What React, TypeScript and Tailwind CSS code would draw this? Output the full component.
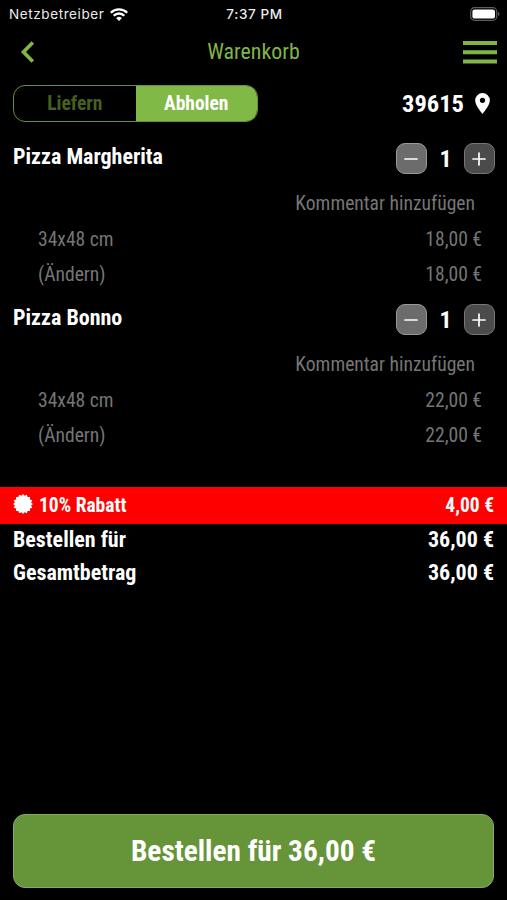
import type { ReactNode } from 'react';

interface CartItem {
  name: string;
  size: string;
  quantity: number;
  price: string;
}

interface SummaryRowProps {
  label: string;
  value: string;
}

interface QuantityButtonProps {
  label: string;
  className: string;
  children: ReactNode;
}

const items: CartItem[] = [
  { name: 'Pizza Margherita', size: '34x48 cm', quantity: 1, price: '18,00 €' },
  { name: 'Pizza Bonno', size: '34x48 cm', quantity: 1, price: '22,00 €' },
];

export default function App() {
  return (
    <div className="flex h-[900px] w-[507px] flex-col overflow-hidden bg-black font-['Roboto_Condensed',Roboto,sans-serif] text-white font-stretch-75%">
      <StatusBar />
      <Header />
      <DeliveryRow />
      <main className="flex-1">
        {items.map((item) => (
          <CartEntry key={item.name} item={item} />
        ))}
        <div className="mt-[43px] flex h-[37px] items-center justify-between bg-[#ff0000] px-[13px] text-[19.5px] font-bold">
          <span className="flex items-center gap-[6px]">
            <BadgeIcon />
            10% Rabatt
          </span>
          <span>4,00 €</span>
        </div>
        <div className="-mt-px">
          <SummaryRow label="Bestellen für" value="36,00 €" />
          <SummaryRow label="Gesamtbetrag" value="36,00 €" />
        </div>
      </main>
      <footer className="px-[13px] pb-3">
        <button className="flex h-[74px] w-full items-center justify-center rounded-[12px] border border-[#85ac62] bg-[#669438] pt-0.5 text-[29.3px] font-bold">
          Bestellen für 36,00 €
        </button>
      </footer>
    </div>
  );
}

function StatusBar() {
  return (
    <div className="grid h-7 grid-cols-3 items-center pr-[7px] pl-[9px] font-[Inter,sans-serif] text-[13.5px] tracking-[0.6px] text-[#ececec] font-stretch-100%">
      <div className="flex items-center gap-[6px]">
        Netzbetreiber
        <WifiIcon />
      </div>
      <span className="text-center font-medium">7:37 PM</span>
      <div className="flex justify-end">
        <BatteryIcon />
      </div>
    </div>
  );
}

function Header() {
  return (
    <header className="grid h-12 grid-cols-3 items-center px-[10px] text-[#80b547]">
      <svg className="ml-[10px]" width="15" height="24" viewBox="0 0 15 24" fill="none" stroke="currentColor" strokeWidth="3.7">
        <path d="M12.8 2.5 3.5 12l9.3 9.5" />
      </svg>
      <h1 className="text-center text-[21.9px]">Warenkorb</h1>
      <svg className="justify-self-end" width="34" height="23" viewBox="0 0 34 23" fill="currentColor">
        <path d="M0 0h34v4H0zM0 9.3h34v4H0zM0 18.6h34v4H0z" />
      </svg>
    </header>
  );
}

function DeliveryRow() {
  return (
    <div className="mt-[9px] flex h-[37px] items-center justify-between pr-[17px] pl-[13px]">
      <div className="flex h-full w-[245px] overflow-hidden rounded-[12px] border-[1.5px] border-[#659239] text-[19.5px] font-bold">
        <button className="flex-1 text-[#456020]">Liefern</button>
        <button className="flex-1 bg-[#80b946] text-white">Abholen</button>
      </div>
      <div className="flex items-center gap-[11px] text-[24.5px] font-bold">
        <span className="pt-0.5">39615</span>
        <svg width="15" height="21" viewBox="0 0 14 20" fill="currentColor">
          <path
            fillRule="evenodd"
            d="M7 0a7 7 0 0 0-7 7c0 5.2 7 13 7 13s7-7.8 7-13a7 7 0 0 0-7-7Zm0 9.5a2.5 2.5 0 1 1 0-5 2.5 2.5 0 0 1 0 5Z"
          />
        </svg>
      </div>
    </div>
  );
}

function CartEntry({ item }: { item: CartItem }) {
  return (
    <section className="h-[161px] pt-4">
      <div className="flex h-[41px] items-center justify-between pr-[12px] pl-[13px]">
        <h2 className="-mt-1 text-[22px] font-bold">{item.name}</h2>
        <div className="flex items-center">
          <QuantityButton label="Weniger" className="border-[#999] bg-[#6c6c6c]">
            <path d="M1 7h12" />
          </QuantityButton>
          <span className="w-[37px] text-center text-[24px] font-bold">{item.quantity}</span>
          <QuantityButton label="Mehr" className="border-[#777] bg-[#4b4b4b]">
            <path d="M1 7h12M7 1v12" />
          </QuantityButton>
        </div>
      </div>
      <div className="pt-[7px] pr-[25px] pl-[38px] text-[19.6px] leading-[35.5px] text-[#757575]">
        <p className="mr-[7px] text-right">Kommentar hinzufügen</p>
        <div className="flex justify-between">
          <span>{item.size}</span>
          <span>{item.price}</span>
        </div>
        <div className="flex justify-between">
          <span>(Ändern)</span>
          <span>{item.price}</span>
        </div>
      </div>
    </section>
  );
}

function QuantityButton({ label, className, children }: QuantityButtonProps) {
  return (
    <button
      aria-label={label}
      className={`flex size-[31px] items-center justify-center rounded-[9px] border pr-px ${className}`}
    >
      <svg width="14" height="14" viewBox="0 0 14 14" stroke="white" strokeWidth="1.7" strokeLinecap="round">
        {children}
      </svg>
    </button>
  );
}

function SummaryRow({ label, value }: SummaryRowProps) {
  return (
    <div className="flex h-[33px] items-center justify-between px-[13px] text-[22px] font-bold">
      <span>{label}</span>
      <span>{value}</span>
    </div>
  );
}

// Sixteen-point seal, points alternate between two radii
function BadgeIcon() {
  const points = Array.from({ length: 32 }, (_, i) => {
    const angle = (i * Math.PI) / 16;
    const radius = i % 2 === 0 ? 10 : 8.3;
    return `${10 + radius * Math.cos(angle)},${10 + radius * Math.sin(angle)}`;
  }).join(' ');

  return (
    <svg className="-mt-1" width="20" height="20" viewBox="0 0 20 20" fill="currentColor">
      <polygon points={points} />
    </svg>
  );
}

function WifiIcon() {
  return (
    <svg width="18" height="13" viewBox="0 0 18 13" fill="none" stroke="white" strokeWidth="2.3">
      <path d="M0.8 4.8a11.6 11.6 0 0 1 16.4 0M3.7 7.7a7.5 7.5 0 0 1 10.6 0" />
      <path d="M9 13 6.2 10.2a4 4 0 0 1 5.6 0Z" fill="white" stroke="none" />
    </svg>
  );
}

function BatteryIcon() {
  return (
    <svg width="30" height="14" viewBox="0 0 30 14" fill="none">
      <rect x="0.7" y="0.7" width="26" height="12.6" rx="3.8" stroke="#5e5e5e" strokeWidth="1.2" />
      <rect x="2.4" y="2.4" width="22.6" height="9.2" rx="2.2" fill="white" />
      <path d="M28 4.8c2 .8 2 3.6 0 4.4Z" fill="#5e5e5e" />
    </svg>
  );
}
